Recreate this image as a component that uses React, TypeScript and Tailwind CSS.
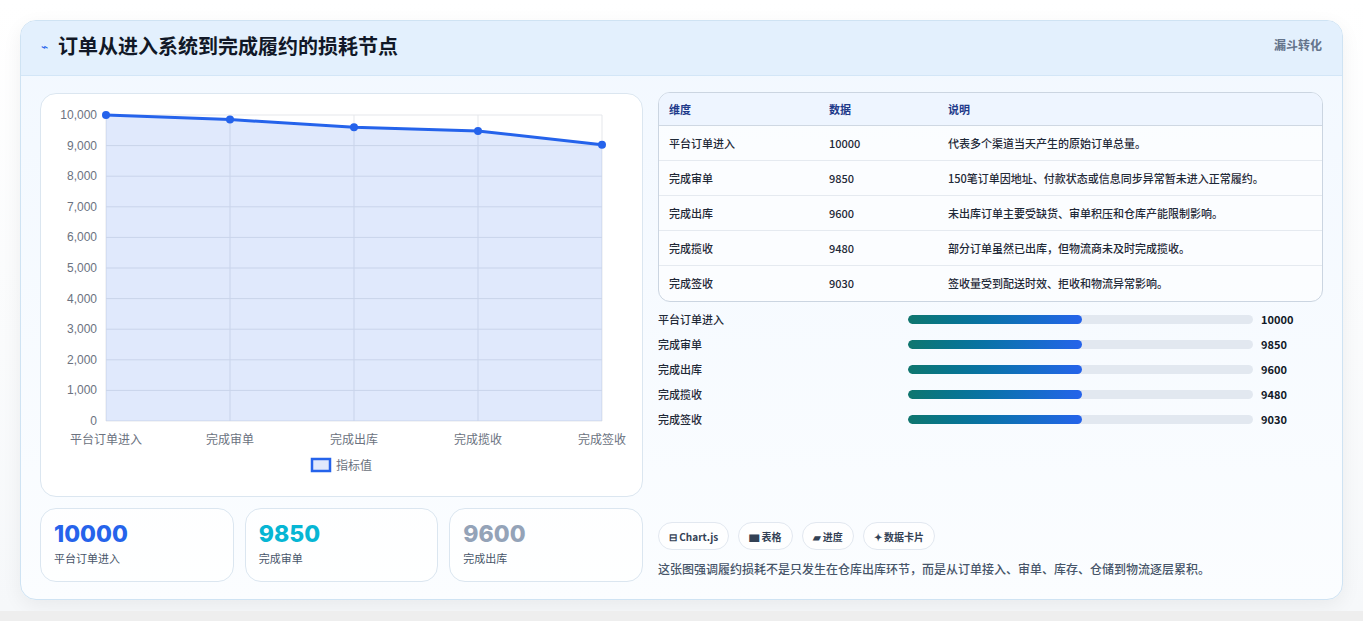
import React from "react";

const rows = [
  ["平台订单进入", 10000, "代表多个渠道当天产生的原始订单总量。"],
  ["完成审单", 9850, "150笔订单因地址、付款状态或信息同步异常暂未进入正常履约。"],
  ["完成出库", 9600, "未出库订单主要受缺货、审单积压和仓库产能限制影响。"],
  ["完成揽收", 9480, "部分订单虽然已出库，但物流商未及时完成揽收。"],
  ["完成签收", 9030, "签收量受到配送时效、拒收和物流异常影响。"],
] as const;

function Chart() {
  const x0 = 65, x1 = 561, y0 = 21, y1 = 327;
  const xs = rows.map((_, i) => x0 + (i * (x1 - x0)) / 4);
  const ys = rows.map((r) => y1 - ((r[1] as number) / 10000) * (y1 - y0));
  const pts = xs.map((x, i) => `${x},${ys[i]}`).join(" ");
  return (
    <svg width="602" height="400" className="block">
      {Array.from({ length: 11 }).map((_, i) => {
        const y = y1 - (i * (y1 - y0)) / 10;
        return (
          <g key={i}>
            <line x1={x0} x2={x1} y1={y} y2={y} stroke="#e5e7eb" />
            <text x={56} y={y + 4} textAnchor="end" fontSize="12" fill="#6b7280" fontFamily="Liberation Sans, sans-serif">
              {(i * 1000).toLocaleString("en-US")}
            </text>
          </g>
        );
      })}
      {xs.map((x, i) => (
        <g key={i}>
          <line x1={x} x2={x} y1={y0} y2={y1} stroke="#e5e7eb" />
          <text x={x} y={350} textAnchor="middle" fontSize="12" fill="#6b7280" fontFamily="Liberation Sans, 'Noto Sans CJK SC', sans-serif">
            {rows[i][0]}
          </text>
        </g>
      ))}
      <polygon points={`${x0},${y1} ${pts} ${x1},${y1}`} fill="rgba(37,99,235,0.14)" />
      <polyline points={pts} fill="none" stroke="#2563eb" strokeWidth="3" />
      {xs.map((x, i) => (
        <circle key={i} cx={x} cy={ys[i]} r="4" fill="#2563eb" />
      ))}
      <rect x={271} y={365} width={18} height={12} fill="rgba(37,99,235,0.14)" stroke="#2563eb" strokeWidth="2.5" />
      <text x={295} y={376} fontSize="12" fill="#6b7280" fontFamily="Liberation Sans, 'Noto Sans CJK SC', sans-serif">指标值</text>
    </svg>
  );
}

export default function App() {
  return (
    <div className="w-[1363px] h-[621px] bg-white" style={{ fontFamily: "'Noto Sans CJK SC', Inter, sans-serif" }}>
      <div className="pt-5 px-5 pb-[11px] bg-gradient-to-b from-white to-[#f6f8fa]">
        <div className="h-[580px] rounded-2xl border border-[#cfe3f3] shadow-[0_6px_20px_rgba(0,0,0,0.06)] overflow-hidden bg-gradient-to-b from-[#f2f8ff] to-[#fbfdff] flex flex-col">
          <div className="h-[55px] bg-[#e3f0fd] border-b border-[#d3e6f7] flex items-start justify-between px-5">
            <div className="flex items-center gap-[10px] mt-[15px]">
              <span className="text-[#2563eb] text-xs">⌁</span>
              <span className="text-[20px] font-bold text-[#111827] leading-none">订单从进入系统到完成履约的损耗节点</span>
            </div>
            <span className="text-xs font-bold text-[#64748b] mt-[16px]">漏斗转化</span>
          </div>
          <div className="flex gap-[15px] px-[19px] pt-[17px]">
            <div className="w-[603px] flex flex-col gap-[11px]">
              <div className="h-[404px] rounded-2xl border border-[#dbe6f0] bg-white">
                <Chart />
              </div>
              <div className="flex gap-[11px]">
                {[
                  ["10000", "text-[#2563eb]"],
                  ["9850", "text-[#06b6d4]"],
                  ["9600", "text-[#94a3b8]"],
                ].map(([v, c], i) => (
                  <div key={i} className="w-[194px] h-[74px] rounded-2xl border border-[#dbe6f0] bg-white/70 px-[13px] pt-[11px]">
                    <div className={`text-[23px] font-extrabold leading-7 ${c}`} style={{ fontFamily: "Inter, sans-serif" }}>{v}</div>
                    <div className="text-[11px] text-[#475569] mt-[2px]">{rows[i][0]}</div>
                  </div>
                ))}
              </div>
            </div>
            <div className="w-[666px] flex flex-col -mt-px">
              <div className="rounded-xl border border-[#cbd5e1] overflow-hidden bg-white/60">
                <div className="flex h-[33px] items-center bg-[#eef5ff] border-b border-[#cfd8e3] text-[11px] font-bold text-[#1e3a8a]">
                  <div className="w-[160px] pl-[10px]">维度</div>
                  <div className="w-[119px] pl-[10px]">数据</div>
                  <div className="pl-[10px]">说明</div>
                </div>
                {rows.map((r, i) => (
                  <div key={i} className={`flex h-[35px] items-center text-[11px] font-medium text-[#1f2937] ${i < 4 ? "border-b border-[#e5eaf0]" : ""}`}>
                    <div className="w-[160px] pl-[10px]">{r[0]}</div>
                    <div className="w-[119px] pl-[10px]">{r[1]}</div>
                    <div className="pl-[10px]">{r[2]}</div>
                  </div>
                ))}
              </div>
              <div className="flex flex-col gap-[8px] mt-[9px]">
                {rows.map((r, i) => (
                  <div key={i} className="flex items-center h-[17px] text-[11px] font-medium">
                    <div className="w-[250px] text-[#1f2937]">{r[0]}</div>
                    <div className="w-[345px] h-[9px] rounded-full bg-[#e2e8f0] overflow-hidden">
                      <div className="w-[174px] h-full rounded-full bg-gradient-to-r from-[#0f766e] to-[#2563eb]" />
                    </div>
                    <div className="ml-[8px] font-bold text-[#111827]">{r[1]}</div>
                  </div>
                ))}
              </div>
              <div className="flex gap-[9px] mt-[94px]">
                {["⊟ Chart.js", "▆ 表格", "▰ 进度", "✦ 数据卡片"].map((t) => (
                  <div key={t} className="h-[28px] px-[10px] rounded-full border border-[#e2e8f0] bg-white/70 flex items-center text-[10px] font-bold text-[#334155]">{t}</div>
                ))}
              </div>
              <div className="mt-[10px] text-[12px] font-medium text-[#475569]">这张图强调履约损耗不是只发生在仓库出库环节，而是从订单接入、审单、库存、仓储到物流逐层累积。</div>
            </div>
          </div>
        </div>
      </div>
      <div className="h-[10px] bg-[#eeeeee]" />
    </div>
  );
}
